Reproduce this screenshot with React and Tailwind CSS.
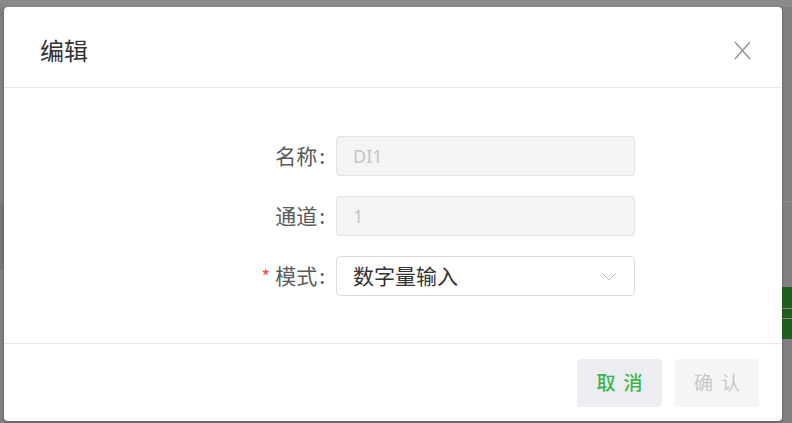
const cjk = { fontFamily: '"Noto Sans CJK SC", "Noto Sans", sans-serif' };

function FormRow({ label, required, children }) {
  return (
    <div className="flex items-center h-[40px]">
      <div className="w-[100px] pr-[1px] flex justify-end items-center text-[21px] text-[#5a5a5a]">
        {required && <span className="text-[#f04c4c] mr-[5px] text-[19px]">*</span>}
        <span>{label}</span>
        <span className="ml-[2px]">:</span>
      </div>
      <div className="ml-[10px] w-[299px]">{children}</div>
    </div>
  );
}

export default function App() {
  return (
    <div className="relative w-[792px] h-[423px] overflow-hidden bg-[#808080]" style={cjk}>
      {/* page behind the overlay */}
      <div className="absolute inset-0 flex flex-col">
        <div className="h-[7px] bg-[#8a8a8a]" />
        <div className="flex-1 flex">
          <div className="w-[4px] flex flex-col">
            <div className="h-[196px]" />
            <div className="h-[67px] bg-[#777]" />
          </div>
          <div className="flex-1" />
          <div className="w-[10px] flex flex-col">
            <div className="h-[194px]" />
            <div className="h-[1px] bg-[#8e8e8e]" />
            <div className="h-[85px]" />
            <div className="h-[21px] bg-[#1e5f1f]" />
            <div className="h-[1px] bg-[#8a8a8a]" />
            <div className="h-[9px] bg-[#1e5f1f]" />
            <div className="h-[1px] bg-[#8a8a8a]" />
            <div className="h-[20px] bg-[#1e5f1f]" />
          </div>
        </div>
      </div>

      {/* dialog */}
      <div className="absolute left-[4px] top-[7px] w-[778px] h-[414px] bg-white rounded-[4px] flex flex-col shadow-[0_1px_3px_rgba(0,0,0,0.3)]">
        <div className="h-[81px] flex items-center justify-between pl-[36px] pr-[30px] border-b border-[#e9e9e9] shrink-0">
          <span className="text-[24px] text-[#333] mt-[6px]">编辑</span>
          <svg width="19" height="19" viewBox="0 0 19 19" className="mt-[6px]">
            <path d="M2 1 L17 18 M17 1 L2 18" stroke="#909090" strokeWidth="1.3" fill="none" />
          </svg>
        </div>

        <div className="flex-1 pt-[48px] pl-[222px] flex flex-col gap-[20px]">
          <FormRow label="名称">
            <div className="h-[40px] rounded-[4px] border border-[#e3e3e3] bg-[#f4f4f5] flex items-center px-[16px] text-[18px] text-[#c4c4c4]" style={{ fontFamily: '"Noto Sans", sans-serif' }}>
              DI1
            </div>
          </FormRow>
          <FormRow label="通道">
            <div className="h-[40px] rounded-[4px] border border-[#e3e3e3] bg-[#f4f4f5] flex items-center px-[16px] text-[18px] text-[#c4c4c4]" style={{ fontFamily: '"Noto Sans", sans-serif' }}>
              1
            </div>
          </FormRow>
          <FormRow label="模式" required>
            <div className="h-[40px] rounded-[4px] border border-[#dcdcdc] bg-white flex items-center justify-between pl-[16px] pr-[17px] text-[21px] text-[#333]">
              <span>数字量输入</span>
              <svg width="16" height="9" viewBox="0 0 16 9">
                <path d="M1 1 L8 8 L15 1" stroke="#c0c0c0" strokeWidth="1" fill="none" />
              </svg>
            </div>
          </FormRow>
        </div>

        <div className="h-[78px] border-t border-[#e9e9e9] flex items-center justify-end gap-[13px] pr-[23px] shrink-0">
          <button className="w-[85px] h-[48px] rounded-[4px] bg-[#ebedf0] text-[#3cb54b] text-[19px] font-medium tracking-[8px] pl-[8px]">
            取消
          </button>
          <button className="w-[84px] h-[48px] rounded-[4px] bg-[#f5f5f5] text-[#c8c8c8] text-[19px] tracking-[8px] pl-[8px]">
            确认
          </button>
        </div>
      </div>
    </div>
  );
}
